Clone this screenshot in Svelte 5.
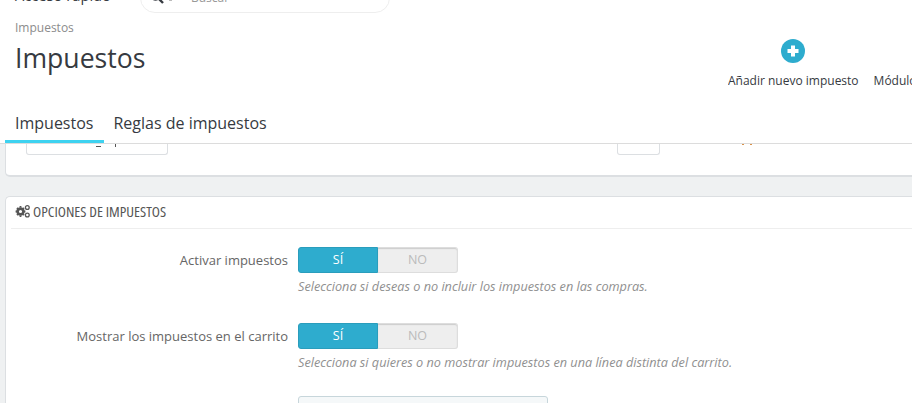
<script lang="ts">
  const rows = [
    { label: "Activar impuestos", help: "Selecciona si deseas o no incluir los impuestos en las compras." },
    { label: "Mostrar los impuestos en el carrito", help: "Selecciona si quieres o no mostrar impuestos en una línea distinta del carrito." }
  ];
</script>

<div class="page">
  <header class="topbar">
    <span class="quick">Acceso rápido</span>
    <div class="search">
      <svg class="loupe" width="14" height="14" viewBox="0 0 14 14"><circle cx="5.500" cy="5.500" r="4.200" fill="none" stroke="#363a41" stroke-width="2"/><path d="M8.600 8.600 13 13" stroke="#363a41" stroke-width="2.400"/></svg>
      <span class="caret"></span>
      <span class="search-text">Buscar</span>
    </div>
    <span class="shop">Vende</span>
  </header>

  <section class="head">
    <div class="titles">
      <div class="crumb">Impuestos</div>
      <h1>Impuestos</h1>
    </div>
    <div class="toolbar">
      <div class="tool">
        <svg width="24" height="24" viewBox="0 0 24 24"><circle cx="12" cy="12" r="12" fill="#2eacce"/><path d="M12 6.500v11M6.500 12h11" stroke="#fff" stroke-width="4"/></svg>
        <span>Añadir nuevo impuesto</span>
      </div>
      <div class="tool cut">
        <span class="spacer"></span>
        <span>Módulos recomendados</span>
      </div>
    </div>
  </section>

  <nav class="tabs">
    <div class="tab active">Impuestos</div>
    <div class="tab">Reglas de impuestos</div>
  </nav>

  <main class="content">
    <div class="panel-top">
      <div class="field-a"></div>
      <div class="field-b"></div>
      <!-- descenders of the row scrolled away under the tabs -->
      <span class="mark g"></span>
      <span class="mark p"></span>
      <span class="mark o1"></span>
      <span class="mark o2"></span>
    </div>

    <div class="panel">
      <div class="panel-heading">
        <svg width="15" height="14" viewBox="0 0 15 13">
          <g fill="none" stroke="#555" >
            <circle cx="5.500" cy="7" r="2.900" stroke-width="2.600"/>
            <path d="M5.500 1.600v1.400M5.500 11v1.400M.6 7H2M9 7h1.400M2 3.500l1 1M8 9.500l1 1M2 10.500l1-1M8 4.500l1-1" stroke-width="1.800"/>
            <circle cx="12.300" cy="3" r="1.900" stroke-width="1.300"/>
            <circle cx="12.300" cy="10.500" r="1.900" stroke-width="1.300"/>
          </g>
        </svg>
        <span>OPCIONES DE IMPUESTOS</span>
      </div>

      {#each rows as row}
        <div class="row">
          <div class="label">{row.label}</div>
          <div class="control">
            <div class="switch">
              <div class="on">SÍ</div>
              <div class="off">NO</div>
            </div>
            <p class="help">{row.help}</p>
          </div>
        </div>
      {/each}

      <div class="row last">
        <div class="label"></div>
        <div class="control"><div class="select"></div></div>
      </div>
    </div>
  </main>
</div>

<style>
  :global(body) {
    margin: 0;
    background: #eff1f2;
  }
  .page {
    width: 912px;
    height: 403px;
    overflow: hidden;
    background: #eff1f2;
    font-family: "Open Sans", sans-serif;
    color: #666;
  }
  .topbar {
    height: 13px;
    background: #fff;
    display: flex;
    align-items: flex-end;
    overflow: hidden;
  }
  .quick {
    margin-left: 15px;
    font-size: 14.700px;
    line-height: 18px;
    margin-bottom: 9px;
    color: #363a41;
    width: 125px;
    flex: none;
  }
  .search {
    width: 250px;
    height: 30px;
    flex: none;
    box-sizing: border-box;
    border: 1px solid #eee;
    border-radius: 15px;
    display: flex;
    align-items: center;
    padding-left: 9px;
  }
  .loupe {
    flex: none;
    margin-top: -2px;
  }
  .caret {
    width: 3px;
    height: 1px;
    background: #bbb;
    margin: 4px 0 0 5px;
  }
  .search-text {
    margin: -2px 0 0 19px;
    font-size: 12px;
    color: #999;
  }
  .shop {
    margin-left: 488px;
    font-size: 14px;
    line-height: 18px;
    margin-bottom: 9px;
    color: #363a41;
    white-space: nowrap;
  }
  .head {
    height: 96px;
    background: #fff;
    display: flex;
    justify-content: space-between;
  }
  .titles {
    padding: 7px 0 0 15px;
  }
  .crumb {
    font-size: 12px;
    line-height: 16px;
    color: #8c8c8c;
  }
  h1 {
    margin: 4px 0 0;
    font-size: 26.600px;
    line-height: 36px;
    font-weight: 400;
    color: #363a41;
  }
  .toolbar {
    display: flex;
    gap: 15px;
    padding-top: 26px;
    width: 184px;
    flex: none;
    overflow: hidden;
  }
  .tool {
    display: flex;
    flex-direction: column;
    align-items: center;
    flex: none;
    gap: 8px;
    font-size: 12px;
    line-height: 20px;
    color: #363a41;
    white-space: nowrap;
  }
  .tool.cut {
    align-items: flex-start;
  }
  .spacer {
    height: 24px;
  }
  .tabs {
    height: 35px;
    background: #fff;
    box-sizing: border-box;
    border-bottom: 1px solid #dcdcdc;
    display: flex;
    padding-left: 5px;
    font-size: 16px;
    color: #363a41;
  }
  .tab {
    height: 34px;
    box-sizing: border-box;
    padding: 3px 10px 0 9px;
    line-height: 22px;
  }
  .tab.active {
    padding: 3px 11px 0 10px;
    border-bottom: 3px solid #3ed2f0;
  }
  .content {
    padding-left: 5px;
  }
  .panel-top {
    height: 31px;
    background: #fff;
    border: solid #dcdfe2;
    border-width: 0 0 2px 1px;
    border-radius: 0 0 0 5px;
    margin-bottom: 19px;
    display: flex;
    position: relative;
  }
  .field-a, .field-b {
    height: 11px;
    box-sizing: border-box;
    border: 1px solid #dcdfe2;
    border-top: 0;
    border-radius: 0 0 3px 3px;
    flex: none;
  }
  .field-a {
    width: 142px;
    margin-left: 20px;
  }
  .field-b {
    width: 43px;
    margin-left: 449px;
  }
  .mark {
    position: absolute;
    top: 0;
    background: #555;
  }
  .mark.g {
    left: 90px;
    width: 5px;
    height: 1px;
    top: 2px;
  }
  .mark.p {
    left: 109px;
    width: 1px;
    height: 3px;
  }
  .mark.o1 {
    left: 736px;
    width: 2px;
    height: 1px;
    background: #d9924a;
  }
  .mark.o2 {
    left: 744px;
    width: 2px;
    height: 1px;
    background: #d9924a;
  }
  .panel {
    background: #fff;
    border: 1px solid #dcdfe2;
    border-right: 0;
    border-bottom: 0;
    border-radius: 5px 0 0 0;
    height: 300px;
    padding-left: 5px;
  }
  .panel-heading {
    height: 32px;
    box-sizing: border-box;
    border-bottom: 1px solid #eee;
    display: flex;
    align-items: center;
    gap: 3px;
    padding: 0 0 3px 4px;
    font-size: 15px;
    font-stretch: 75%;
    color: #555;
  }
  .row {
    display: flex;
    gap: 10px;
    padding-top: 18px;
    height: 58px;
  }
  .row.last {
    padding-top: 15px;
  }
  .label {
    width: 277px;
    flex: none;
    text-align: right;
    font-size: 13px;
    line-height: 26px;
    color: #666;
  }
  .switch {
    width: 160px;
    height: 26px;
    display: flex;
    font-size: 12.500px;
    line-height: 23px;
    text-align: center;
  }
  .on, .off {
    width: 80px;
    box-sizing: border-box;
  }
  .on {
    background: #2eacce;
    border: 1px solid #2a9dbc;
    border-radius: 3px 0 0 3px;
    color: #fff;
  }
  .off {
    background: #eee;
    border: 1px solid #ddd;
    border-left: 0;
    border-radius: 0 3px 3px 0;
    box-shadow: inset 0 1px 1px #ccc;
    color: #bbb;
  }
  .help {
    margin: 5px 0 0;
    font-size: 12.700px;
    line-height: 16px;
    font-style: italic;
    color: #909090;
    white-space: nowrap;
  }
  .select {
    width: 250px;
    height: 30px;
    box-sizing: border-box;
    background: #f5f8f9;
    border: 1px solid #c7d6db;
    border-radius: 3px;
  }
</style>
